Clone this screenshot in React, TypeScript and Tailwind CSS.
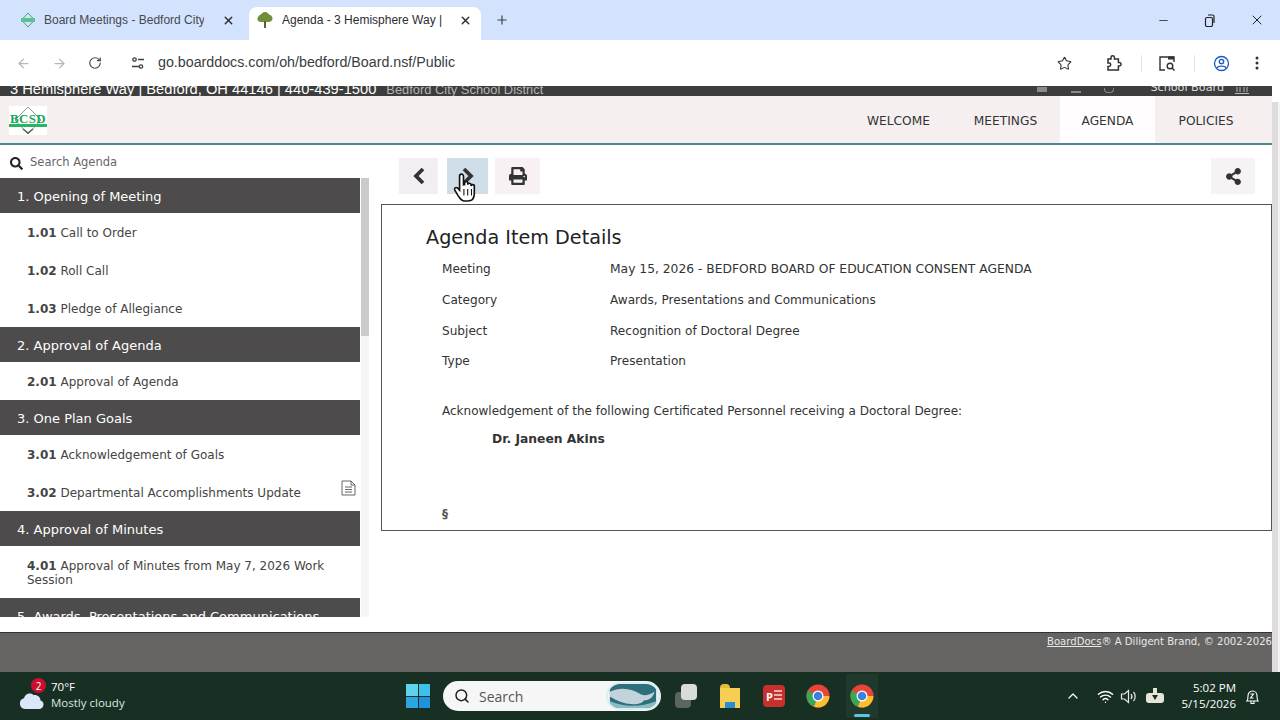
import { ArrowLeft, ArrowRight, ChevronUp, Minus, Plus, RotateCw, Search, Star, Wifi, X } from "lucide-react";
import { FaPrint, FaSearch, FaShareAlt } from "react-icons/fa";

const VERDANA = "font-['DejaVu_Sans',sans-serif]";

function TreeIcon() {
  return (
    <svg width="18" height="18" viewBox="0 0 18 18" className="shrink-0">
      <path d="M9 1c2 0 3 1 4 2.500 2 .5 3.500 2 3.500 4s-2 3.500-4 3.500h-7C3 11 1 9.500 1.500 7.500S3 4 5 3.500C6 2 7 1 9 1z" fill="#6f8f3a" />
      <rect x="8" y="10" width="2" height="7" fill="#6b5a2a" />
    </svg>
  );
}

function SmallLogo() {
  return (
    <svg width="16" height="16" viewBox="0 0 16 16" className="shrink-0">
      <path d="M8 1l6.500 7L8 15 1.500 8z" fill="#cfe9e2" stroke="#4f9f92" />
      <rect x="1" y="6" width="14" height="4" fill="#5cc09b" />
    </svg>
  );
}

function Logo() {
  return (
    <div className="relative mt-[2px] flex h-[29px] w-[38px] items-center justify-center bg-white">
      <svg width="38" height="29" viewBox="0 0 38 29" className="absolute inset-0">
        <path d="M19 1L32 14 19 28 6 14z" fill="#fff" stroke="#8a9892" strokeWidth="1" />
        <path d="M14 23l5 4 5-4" fill="none" stroke="#54635d" strokeWidth="1.500" />
        <rect x="0" y="18" width="38" height="3" fill="#28b365" />
      </svg>
      <span className="relative mb-[4px] font-['Liberation_Serif',serif] text-[13px] font-bold leading-none tracking-[0.3px] text-[#18a85a]">BCSD</span>
    </div>
  );
}

function Tabs() {
  return (
    <div className="flex h-10 items-end bg-[#d3e3fd] pl-[8px] text-[12px]">
      <div className="flex h-[33px] w-[241px] items-center pb-[7px] pl-[12px] pr-[14px] text-[#45494f]">
        <SmallLogo />
        <span className="ml-[8px] w-[160px] overflow-hidden whitespace-nowrap">Board Meetings - Bedford City</span>
        <X size={13} strokeWidth={2.500} className="ml-auto shrink-0 text-[#2c2c30]" />
      </div>
      <div className="flex h-[33px] w-[232px] items-center rounded-t-lg bg-white pb-[7px] pl-[7px] pr-[9px] text-[#2b2d31]">
        <TreeIcon />
        <span className="ml-[8px] w-[164px] overflow-hidden whitespace-nowrap">Agenda - 3 Hemisphere Way | Bedford</span>
        <X size={13} strokeWidth={2.500} className="ml-auto shrink-0 text-[#2c2c30]" />
      </div>
      <div className="flex h-[33px] items-center pb-[7px] pl-[14px]">
        <Plus size={14} strokeWidth={2} className="text-[#3c4043]" />
      </div>
      <div className="ml-auto flex h-10 items-center gap-[33px] pr-[15px] text-[#222]">
        <Minus size={13} strokeWidth={1.500} />
        <svg width="13" height="13" viewBox="0 0 13 13" fill="none" stroke="#222" strokeWidth="1.200">
          <rect x="2.500" y="3.500" width="7" height="9" rx="1.500" />
          <path d="M5 1h4.500A1.500 1.500 0 0 1 11 2.500V9" />
        </svg>
        <X size={16} strokeWidth={1.500} />
      </div>
    </div>
  );
}

function Toolbar() {
  return (
    <div className="flex h-[46px] items-center bg-white pl-[16px] pr-[21px]">
      <ArrowLeft size={15} className="text-[#b5b7ba]" />
      <ArrowRight size={15} className="ml-[21px] text-[#b5b7ba]" />
      <RotateCw size={14} strokeWidth={2} className="ml-[21px] text-[#45494f]" />
      <svg width="14" height="14" viewBox="0 0 14 14" className="ml-[29px]" fill="none" stroke="#3c4043" strokeWidth="1.300">
        <circle cx="3.500" cy="3.500" r="1.700" />
        <circle cx="10" cy="10.500" r="1.700" />
        <path d="M1 10.500h7M7 3.500h6" />
      </svg>
      <span className="ml-[13px] text-[14.250px] text-[#3a3d41]">go.boarddocs.com/oh/bedford/Board.nsf/Public</span>
      <div className="ml-auto flex items-center">
        <Star size={15} strokeWidth={1.700} className="text-[#303134]" />
        <svg width="18" height="18" viewBox="0 0 18 18" className="ml-[33px]" fill="none" stroke="#303134" strokeWidth="1.500">
          <path d="M3 5h3V3.500a1.700 1.700 0 0 1 3.400 0V5h4v3.500h1a1.700 1.700 0 0 1 0 3.400h-1V16H3v-3.500h1a1.700 1.700 0 0 0 0-3.400H3z" />
        </svg>
        <span className="ml-[18px] h-[17px] w-px bg-[#e3e5e8]" />
        <svg width="18" height="17" viewBox="0 0 18 17" className="ml-[16px]" fill="none" stroke="#303134" strokeWidth="1.400">
          <path d="M7 15H2V2h14v5" />
          <rect x="10" y="1.500" width="6" height="3" fill="#303134" stroke="none" />
          <circle cx="12" cy="11" r="2.800" />
          <path d="M14 13l2.500 2.500" />
        </svg>
        <span className="ml-[18px] h-[17px] w-px bg-[#e3e5e8]" />
        <svg width="17" height="17" viewBox="0 0 17 17" className="ml-[18px]" fill="none" stroke="#1a56c4" strokeWidth="1.300">
          <circle cx="8.500" cy="8.500" r="7" />
          <circle cx="8.500" cy="6.500" r="2.200" />
          <path d="M4 13c1-2.500 8-2.500 9 0" />
        </svg>
        <svg width="4" height="14" viewBox="0 0 4 14" className="ml-[25px]" fill="#303134">
          <circle cx="2" cy="2" r="1.500" />
          <circle cx="2" cy="7" r="1.500" />
          <circle cx="2" cy="12" r="1.500" />
        </svg>
      </div>
    </div>
  );
}

const NAV = [
  { label: "WELCOME", cls: "w-[105px]" },
  { label: "MEETINGS", cls: "w-[109px]" },
  { label: "AGENDA", cls: "w-[95px] bg-[#fffdfd]" },
  { label: "POLICIES", cls: "w-[102px]" },
];

function SiteHeader() {
  return (
    <div className={`w-[1272px] ${VERDANA}`}>
      <div className="flex h-[10px] items-end overflow-hidden bg-[#3d3d3d] pl-[10px] leading-none">
        <span className="translate-y-[1px] whitespace-nowrap font-['Liberation_Sans',sans-serif] text-[14.700px] text-white">3 Hemisphere Way | Bedford, OH 44146 | 440-439-1500</span>
        <span className="ml-[10px] translate-y-[1px] whitespace-nowrap font-['Liberation_Sans',sans-serif] text-[12.900px] text-[#b5b5b5]">Bedford City School District</span>
        <div className="ml-auto flex items-end pr-[22px]">
          <span className="mb-[4px] h-[5px] w-[10px] bg-[#8a8a8a]" />
          <span className="mb-[3px] ml-[24px] h-[4px] w-[10px] border-b-2 border-[#8a8a8a]" />
          <span className="mb-[3px] ml-[23px] h-[5px] w-[10px] rounded-b-sm border border-t-0 border-[#8a8a8a]" />
          <span className="mb-[3px] ml-[36px] whitespace-nowrap text-[11.200px] text-[#ddd]">School Board</span>
          <svg width="16" height="8" viewBox="0 0 16 8" className="mb-[1px] ml-[10px]" fill="none" stroke="#bbb" strokeWidth="1">
            <path d="M3 0v5M6 0v5M10 0v5M13 0v5M1 6.500h14" />
          </svg>
        </div>
      </div>
      <div className="flex h-[49px] items-center justify-between border-b-2 border-[#4d8794] bg-[#f5eff0] pl-[9px] pr-[15px]">
        <Logo />
        <nav className="flex h-full text-[12.200px] text-[#333]">
          {NAV.map((n) => (
            <a key={n.label} className={`flex h-full items-center justify-center pt-[3px] ${n.cls}`}>
              {n.label}
            </a>
          ))}
        </nav>
      </div>
    </div>
  );
}

type Row = { kind: "head"; label: string } | { kind: "item"; num: string; label: string; doc?: boolean };

const ROWS: Row[] = [
  { kind: "head", label: "1. Opening of Meeting" },
  { kind: "item", num: "1.01", label: "Call to Order" },
  { kind: "item", num: "1.02", label: "Roll Call" },
  { kind: "item", num: "1.03", label: "Pledge of Allegiance" },
  { kind: "head", label: "2. Approval of Agenda" },
  { kind: "item", num: "2.01", label: "Approval of Agenda" },
  { kind: "head", label: "3. One Plan Goals" },
  { kind: "item", num: "3.01", label: "Acknowledgement of Goals" },
  { kind: "item", num: "3.02", label: "Departmental Accomplishments Update", doc: true },
  { kind: "head", label: "4. Approval of Minutes" },
  { kind: "item", num: "4.01", label: "Approval of Minutes from May 7, 2026 Work Session" },
  { kind: "head", label: "5. Awards, Presentations and Communications" },
];

function Sidebar() {
  return (
    <div className="flex w-[369px] shrink-0 flex-col">
      <div className="flex h-[33px] items-center pl-[10px] pt-[3px] text-[11.500px] text-[#666]">
        <FaSearch size={13} className="text-[#222]" />
        <span className="ml-[7px]">Search Agenda</span>
      </div>
      <div className="flex h-[439px] overflow-hidden">
        <div className="w-[360px] shrink-0">
          {ROWS.map((r) =>
            r.kind === "head" ? (
              <div key={r.label} className="flex h-[35px] items-center whitespace-nowrap bg-[#4d4b4b] pl-[17px] pt-[3px] text-[13px] text-white">
                {r.label}
              </div>
            ) : (
              <div key={r.num} className={`relative flex items-center pl-[27px] pr-[30px] pt-[2px] text-[12px] leading-[14px] text-[#444] ${r.num === "4.01" ? "h-[52px]" : "h-[38px]"}`}>
                <span>
                  <b>{r.num}</b> {r.label}
                </span>
                {r.doc && (
                  <svg width="15" height="16" viewBox="0 0 15 16" className="absolute right-[4px] top-[7px]" fill="none" stroke="#555" strokeWidth="0.900">
                    <path d="M1 1h9l4 4v10H1zM10 1v4h4M4 7h7M4 9.500h7M4 12h7" />
                  </svg>
                )}
              </div>
            ),
          )}
        </div>
        <div className="ml-[1px] w-[8px] bg-[#f6f6f6]">
          <div className="h-[158px] w-full bg-[#cbcbcb]" />
        </div>
      </div>
    </div>
  );
}

function Detail({ label, value, valueClass = "text-[12.100px]" }: { label: string; value: string; valueClass?: string }) {
  return (
    <div className="flex h-[30.700px] items-center text-[12.100px] text-[#333]">
      <span className="w-[168px] shrink-0">{label}</span>
      <span className={valueClass}>{value}</span>
    </div>
  );
}

function ActionButton({ children, cls }: { children: React.ReactNode; cls: string }) {
  return <div className={`flex h-[36px] items-center justify-center ${cls}`}>{children}</div>;
}

function Chevron({ d }: { d: string }) {
  return (
    <svg width="14" height="18" viewBox="0 0 14 18" fill="none" stroke="#333" strokeWidth="3.800">
      <path d={d} />
    </svg>
  );
}

function Main() {
  return (
    <div className="flex min-w-0 flex-1 flex-col pl-[12px]">
      <div className="relative flex h-[59px] items-center pl-[18px] pr-[17px] pt-[3px]">
        <ActionButton cls="w-[39px] bg-[#f3eef1]">
          <Chevron d="M11 2L4 9l7 7" />
        </ActionButton>
        <ActionButton cls="ml-[9px] w-[41px] bg-[#d0dee9]">
          <Chevron d="M3 2l7 7-7 7" />
        </ActionButton>
        <ActionButton cls="ml-[7px] w-[45px] bg-[#f7f1f4]">
          <FaPrint size={18} className="text-[#333]" />
        </ActionButton>
        <ActionButton cls="ml-auto w-[44px] bg-[#f5f3f4]">
          <FaShareAlt size={17} className="text-[#333]" />
        </ActionButton>
        <svg width="26" height="34" viewBox="0 0 24 28" className="absolute left-[71px] top-[26px]" fill="#fff" stroke="#111" strokeWidth="1.500">
          <path d="M7 3a1.800 1.800 0 0 1 3.600 0v8l1-.2V9.500a1.500 1.500 0 0 1 3 0v1.500a1.500 1.500 0 0 1 3 .2v1a1.500 1.500 0 0 1 3 .3V19c0 4-2 7-6 7h-3c-3 0-4-2-6-5l-3-5c-1-2 1-3 2.500-2L7 16z" />
          <path d="M11 15v6M14.500 15v6M18 15v6" strokeWidth="1" />
        </svg>
      </div>
      <div className="h-[327px] w-[891px] border border-[#555] pl-[44px] pt-[20px]">
        <h1 className="text-[19.200px] leading-[26px] text-[#222]">Agenda Item Details</h1>
        <div className="mt-[3px] pl-[16px]">
          <Detail label="Meeting" value="May 15, 2026 - BEDFORD BOARD OF EDUCATION CONSENT AGENDA" valueClass="text-[12.300px]" />
          <Detail label="Category" value="Awards, Presentations and Communications" />
          <Detail label="Subject" value="Recognition of Doctoral Degree" />
          <Detail label="Type" value="Presentation" />
          <p className="mt-[27px] text-[12px] leading-[14px] text-[#333]">Acknowledgement of the following Certificated Personnel receiving a Doctoral Degree:</p>
          <p className="mt-[14px] pl-[50px] text-[12.300px] font-bold leading-[14px] text-[#333]">Dr. Janeen Akins</p>
          <p className="mt-[61px] text-[12px] font-bold leading-[14px] text-[#555]">§</p>
        </div>
      </div>
    </div>
  );
}

function ChromeIcon() {
  return (
    <svg width="24" height="24" viewBox="0 0 24 24">
      <circle cx="12" cy="12" r="11.500" fill="#e8443a" />
      <path d="M12 12L1.900 6.500A11.500 11.500 0 0 0 8 22.800z" fill="#3aa757" />
      <path d="M12 12h11.400A11.500 11.500 0 0 1 8 22.800z" fill="#fbc02d" />
      <circle cx="12" cy="12" r="5.500" fill="#fff" />
      <circle cx="12" cy="12" r="4.300" fill="#3f7fe0" />
    </svg>
  );
}

function Taskbar() {
  return (
    <div className="flex h-12 items-center bg-[#173023] font-['Open_Sans',sans-serif] text-white">
      <div className="relative ml-[18px] flex w-[300px] items-center">
        <svg width="28" height="24" viewBox="0 0 28 24" className="mt-[8px]">
          <path d="M7 21a5.500 5.500 0 0 1-1-10.800C7 6 12 4 15.500 7c4-.5 7 2 7 5.500 2 .5 3 2 3 4 0 2.500-2 4.500-4.500 4.500z" fill="#dbe6fa" />
        </svg>
        <span className="absolute left-[13px] top-[-2px] flex h-[15px] w-[15px] items-center justify-center rounded-full bg-[#c8102e] text-[10px] leading-none">2</span>
        <div className="ml-[5px] mt-[-2px] text-[11.500px] leading-[16.500px]">
          <div>70°F</div>
          <div className="text-[#dfe6e2]">Mostly cloudy</div>
        </div>
      </div>
      <div className="ml-[88px] grid h-6 w-6 grid-cols-2 gap-[1px]">
        <span className="bg-[#5fd3ec]" />
        <span className="bg-[#3fc0e8]" />
        <span className="bg-[#2ba7e2]" />
        <span className="bg-[#1e92dc]" />
      </div>
      <div className="ml-[13px] flex h-[30px] w-[218px] items-center overflow-hidden rounded-full bg-[#f6f6f6] pl-[11px] text-[14px] text-[#555]">
        <Search size={16} strokeWidth={2.200} className="text-[#1d1d1d]" />
        <span className="ml-[9px]">Search</span>
        <svg width="54" height="28" viewBox="0 0 54 28" className="ml-auto mr-px rounded-full border-2 border-[#d5f0f2]">
          <rect width="54" height="28" fill="#2f6f7c" />
          <path d="M0 9c12-6 26-4 36 3 5 2 10 1 16-3-1 6-6 10-12 10-3 5-14 6-24 3C8 20 3 16 0 15z" fill="#c3d3dc" />
          <path d="M0 20c14 6 34 8 54 0v8H0z" fill="#8fbcc0" />
        </svg>
      </div>
      <div className="relative ml-[14px] h-6 w-6">
        <span className="absolute bottom-0 left-0 h-[16px] w-[16px] rounded-sm bg-[#5c6560]" />
        <span className="absolute right-[2px] top-0 h-[16px] w-[16px] rounded-sm bg-[#d9dcda]" />
      </div>
      <div className="ml-[21px] flex h-[24px] w-[20px] flex-col">
        <span className="h-[4px] w-[10px] rounded-t-sm bg-[#e8b93a]" />
        <span className="relative flex-1 bg-[#f6cf52]">
          <span className="absolute bottom-0 left-[5px] h-[6px] w-[10px] bg-[#2b8ed0]" />
        </span>
      </div>
      <div className="ml-[23px] flex h-[22px] w-[22px] items-center rounded-sm bg-[#c8302c] pl-[3px] text-[11px] font-bold leading-none">
        <span>P</span>
        <svg width="9" height="14" viewBox="0 0 9 14" className="ml-[1px]" fill="none" stroke="#f4d8d6" strokeWidth="1.300">
          <path d="M0 2h8M0 6h8M0 10h8" />
        </svg>
      </div>
      <div className="ml-[21px]">
        <ChromeIcon />
      </div>
      <div className="relative ml-[16px] flex h-[44px] w-[32px] items-center justify-center bg-[#1f3a2c]">
        <ChromeIcon />
        <span className="absolute bottom-[1px] left-[8px] h-[3px] w-[16px] rounded-full bg-[#5fc4e0]" />
      </div>
      <div className="ml-auto flex items-center pr-[20px]">
        <ChevronUp size={16} strokeWidth={1.800} />
        <Wifi size={17} className="ml-[16px]" />
        <svg width="18" height="17" viewBox="0 0 18 17" className="ml-[6px]" fill="none" stroke="#e8e8e8" strokeWidth="1.200">
          <path d="M1.500 6v5h3l4 3.500v-12l-4 3.500zM11 6c1.200 1.500 1.200 3.500 0 5M13.500 4c2.200 2.500 2.200 6.500 0 9" />
        </svg>
        <svg width="20" height="16" viewBox="0 0 20 16" className="ml-[7px]" fill="#e6e6d8">
          <rect x="1" y="5" width="18" height="10" rx="3" />
          <rect x="8" y="0" width="4" height="6" />
          <path d="M7 7h6l-3 5z" fill="#173023" />
        </svg>
        <div className="ml-[17px] text-right text-[11.500px] leading-[16.500px]">
          <div>5:02 PM</div>
          <div>5/15/2026</div>
        </div>
        <svg width="15" height="17" viewBox="0 0 15 17" className="ml-[9px]" fill="none" stroke="#fff" strokeWidth="1.100">
          <path d="M2 13c1-1 1-2 1-5s2-5 4.500-5S12 5 12 8s0 4 1 5zM6 13v2.500h3V13M5.500 6h3l-3 4h3" />
        </svg>
      </div>
    </div>
  );
}

export default function App() {
  return (
    <div className="flex h-[720px] w-[1280px] flex-col overflow-hidden bg-white font-['Liberation_Sans',sans-serif]">
      <Tabs />
      <Toolbar />
      <div className="relative h-[586px] overflow-hidden">
        <SiteHeader />
        <div className={`flex h-[487px] w-[1272px] ${VERDANA}`}>
          <Sidebar />
          <Main />
        </div>
        <div className={`flex h-[40px] w-full justify-end border-t border-[#333] bg-[#656463] pr-[8px] pt-[1px] text-[10.100px] text-[#e8e8e8] ${VERDANA}`}>
          <span>
            <span className="underline">BoardDocs</span>® A Diligent Brand, © 2002-2026
          </span>
        </div>
        <div className="absolute bottom-0 right-0 top-[16px] w-[8px] bg-[#f4f4f4]">
          <div className="h-full w-[6px] bg-[#dedcdc]" />
        </div>
      </div>
      <Taskbar />
    </div>
  );
}
